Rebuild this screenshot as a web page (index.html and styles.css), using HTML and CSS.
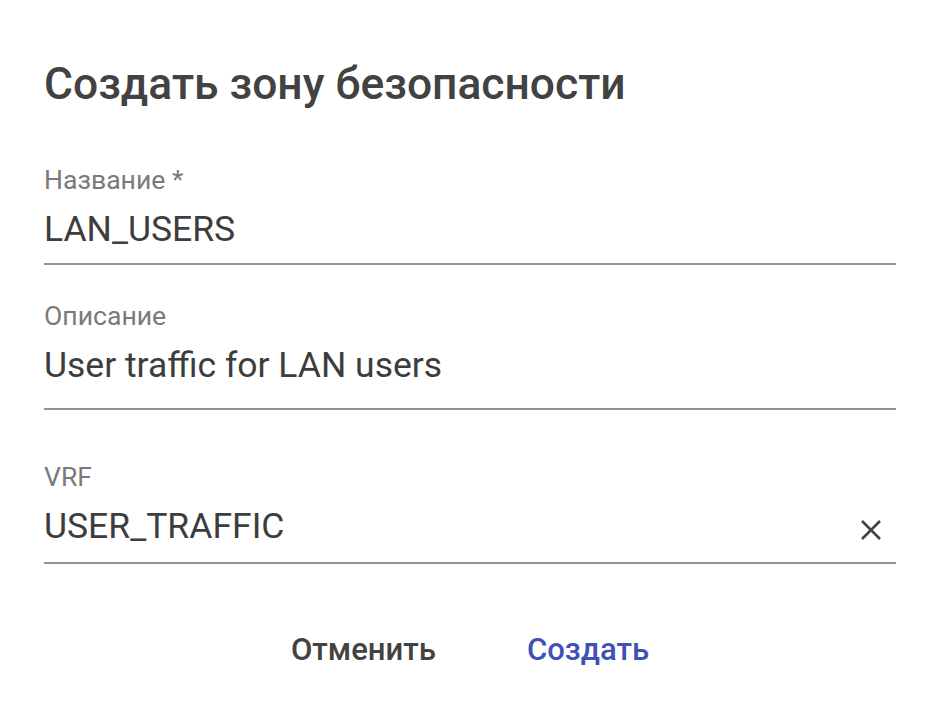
FILE: index.html
```html
<!DOCTYPE html>
<html lang="ru">
<head>
    <meta charset="UTF-8">
    <meta name="viewport" content="width=device-width, initial-scale=1.0">
    <title>Создать зону безопасности</title>
    <link rel="stylesheet" href="styles.css">
</head>
<body>
    <div class="dialog">
        <h1 class="dialog-title">Создать зону безопасности</h1>

        <div class="field">
            <label class="field-label">Название *</label>
            <div class="field-control">
                <span class="field-value">LAN_USERS</span>
            </div>
        </div>

        <div class="field field-textarea">
            <label class="field-label">Описание</label>
            <div class="field-control">
                <span class="field-value">User traffic for LAN users</span>
            </div>
        </div>

        <div class="field field-select">
            <label class="field-label">VRF</label>
            <div class="field-control">
                <span class="field-value">USER_TRAFFIC</span>
                <button class="clear-button" title="Очистить">
                    <svg width="24" height="24" viewBox="0 0 24 24">
                        <path d="M3 3 L21 21 M21 3 L3 21" stroke="#424242" stroke-width="2.6" stroke-linecap="butt" fill="none"/>
                    </svg>
                </button>
            </div>
        </div>

        <div class="dialog-actions">
            <button class="action-button">Отменить</button>
            <button class="action-button primary">Создать</button>
        </div>
    </div>
</body>
</html>
```

FILE: styles.css
```css
/* General Styling */
body {
    margin: 0;
    padding: 0;
    font-family: Roboto, 'Noto Sans', sans-serif;
    background: #ffffff;
    color: #3d3d3d;
}

.dialog {
    padding: 54px 50px 0 44px;
}

.dialog-title {
    margin: 0 0 50px 0;
    font-size: 44.4px;
    font-weight: 500;
    color: #424242;
    line-height: 60px;
}

.field {
    margin-bottom: 35px;
}

.field-label {
    display: block;
    font-size: 26.6px;
    color: #7a7a7a;
    line-height: 32px;
}

.field-control {
    display: flex;
    align-items: center;
    justify-content: space-between;
    border-bottom: 2px solid #949494;
    padding: 11px 0 12px 0;
}

.field-value {
    font-size: 35.5px;
    line-height: 44px;
    color: #3d3d3d;
}

.field-textarea {
    margin-bottom: 51px;
}

.field-textarea .field-control {
    padding-bottom: 21px;
}

.field-select .field-control {
    padding-bottom: 14px;
}

.clear-button {
    background: none;
    border: none;
    padding: 0;
    margin: 8px 13px 0 0;
    cursor: pointer;
    display: flex;
}

.dialog-actions {
    display: flex;
    justify-content: center;
    gap: 91px;
    margin-top: 66px;
}

.action-button {
    background: none;
    border: none;
    font-family: inherit;
    font-size: 31.1px;
    line-height: 40px;
    font-weight: 500;
    color: #424242;
    cursor: pointer;
    padding: 0;
}

.action-button.primary {
    color: #3f51b5;
}
```
